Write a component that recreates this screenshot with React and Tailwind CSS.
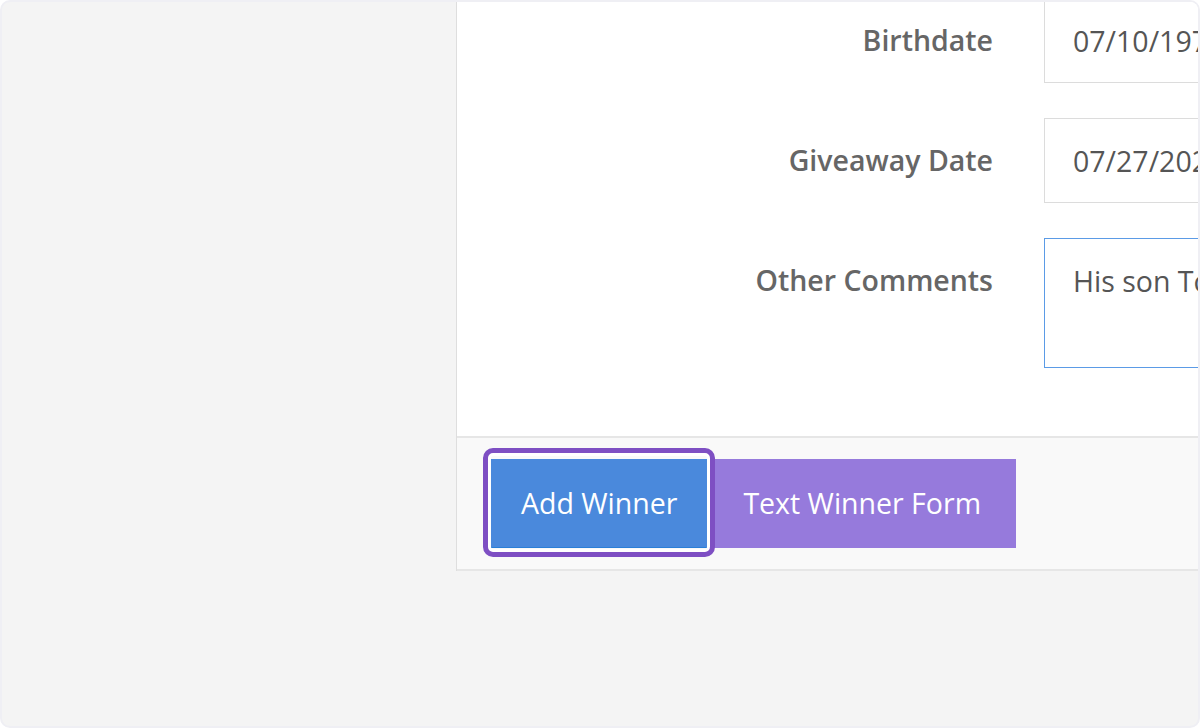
import React from 'react';

const fields = [
    { label: 'Birthdate', value: '07/10/1972' },
    { label: 'Giveaway Date', value: '07/27/2023' },
];

const App = () => {
    return (
        <div
            className="h-[728px] w-[1200px] overflow-hidden rounded-[10px] border-2 border-[#efeff4] bg-[#f4f4f4]"
            style={{ fontFamily: '"Open Sans", "Noto Sans", sans-serif' }}
        >
            <div className="ml-[454px] -mt-[4px] overflow-hidden border-l border-[#dedede] bg-white">
                <div className="grid grid-cols-[536px_1fr] gap-x-[51px] gap-y-[35px] pb-[68px]">
                    {fields.map((f) => (
                        <React.Fragment key={f.label}>
                            <label className="flex h-[85px] items-center justify-end text-[28.5px] font-semibold text-[#666]">
                                {f.label}
                            </label>
                            <input
                                readOnly
                                value={f.value}
                                className="h-[85px] w-[500px] border border-[#dcdcdc] bg-white px-[28px] text-[28.5px] text-[#555] outline-none"
                            />
                        </React.Fragment>
                    ))}
                    <label className="flex h-[85px] items-center justify-end text-[28.5px] font-semibold text-[#666]">
                        Other Comments
                    </label>
                    <textarea
                        readOnly
                        wrap="off"
                        value="His son Tony picked up the prize on Friday."
                        className="h-[130px] w-[500px] resize-none overflow-hidden border border-[#5b9be6] bg-white px-[28px] pt-[23px] text-[28.5px] leading-[38px] text-[#555] outline-none"
                    />
                </div>
                <div className="flex border-y-2 border-[#e6e6e6] bg-[#f9f9f9] pl-[34px] pt-[21px] pb-[21px]">
                    <button className="relative z-10 h-[89px] border-b border-r border-[#2a7fd8] bg-[#4a89dc] px-[30px] text-[28.5px] text-white">
                        Add Winner
                        <span className="pointer-events-none absolute -top-[11px] -bottom-[10px] -left-[8px] -right-[8px] rounded-[10px] border-[5px] border-[#7e4fc3] shadow-[inset_0_0_0_3px_white]" />
                    </button>
                    <button className="h-[89px] bg-[#967adc] px-[35px] text-[28.5px] text-white">
                        Text Winner Form
                    </button>
                </div>
            </div>
        </div>
    );
};

export default App;
